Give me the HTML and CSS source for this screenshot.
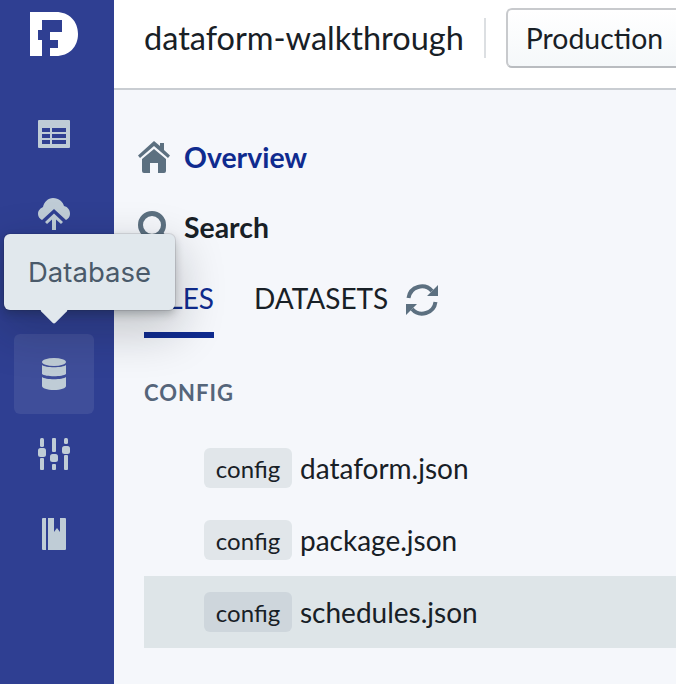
FILE: index.html
```html
<!DOCTYPE html>
<html lang="en">
<head>
<meta charset="utf-8">
<title>dataform-walkthrough</title>
<link rel="stylesheet" href="styles.css">
</head>
<body>
<div class="app">
  <nav class="rail">
    <div class="logo">
      <svg width="48" height="44" viewBox="0 0 48 44"><path fill="#fff" fill-rule="evenodd" d="M0 0H26C39 0 48 9 48 22S39 44 26 44H0ZM12 8V18H8V28H12V44H20V36H28V28H20V20H32V8Z"/></svg>
    </div>
    <a class="rail-item">
      <svg width="32" height="28" viewBox="0 0 32 28"><path class="glyph" fill-rule="evenodd" d="M1 0H31A1 1 0 0 1 32 1V27A1 1 0 0 1 31 28H1A1 1 0 0 1 0 27V1A1 1 0 0 1 1 0ZM4 8V12H12V8ZM14 8V12H28V8ZM4 14V18H12V14ZM14 14V18H28V14ZM4 20V24H12V20ZM14 20V24H28V20Z"/></svg>
    </a>
    <a class="rail-item">
      <svg width="32" height="32" viewBox="0 0 32 32"><path class="glyph" d="M15 0C21 0 25 4 26 8C30 9 32 12 32 16C32 19 30 21 28 22L16 11L4 22C2 21 0 19 0 16C0 12 3 10 5 9C6 4 10 0 15 0Z"/><path class="glyph" d="M16 15.500L25 24L23 26L18 21.500V32H14V21.500L9 26L7 24Z"/></svg>
    </a>
    <a class="rail-item"></a>
    <a class="rail-item is-active">
      <svg width="24" height="32" viewBox="0 0 24 32"><ellipse class="glyph" cx="12" cy="4" rx="12" ry="4"/><path class="glyph" d="M0 7C3 10 21 10 24 7V16C21 19 3 19 0 16Z"/><path class="glyph" d="M0 19C3 22 21 22 24 19V28C24 30 19 32 12 32S0 30 0 28Z"/></svg>
    </a>
    <a class="rail-item">
      <svg width="32" height="32" viewBox="0 0 32 32"><g class="glyph"><rect x="2" width="4" height="9" rx="1.500"/><rect x="2" y="20" width="4" height="12" rx="1"/><rect y="10" width="8" height="9" rx="2.500"/><rect x="14" width="4" height="14" rx="1"/><rect x="14" y="26" width="4" height="6" rx="1"/><rect x="12" y="16" width="8" height="8" rx="2.500"/><rect x="26" width="4" height="6" rx="1.500"/><rect x="26" y="17" width="4" height="15" rx="1"/><rect x="24" y="8" width="8" height="8" rx="2.500"/></g></svg>
    </a>
    <a class="rail-item">
      <svg width="24" height="32" viewBox="0 0 24 32"><path class="glyph" d="M1 0H4V32H1A1 1 0 0 1 0 31V1A1 1 0 0 1 1 0ZM6 0H12V14L15 10L18 14V0H23A1 1 0 0 1 24 1V31A1 1 0 0 1 23 32H6Z"/></svg>
    </a>
  </nav>
  <div class="main">
    <header class="topbar">
      <h1 class="project">dataform-walkthrough</h1>
      <span class="divider"></span>
      <button class="env-button">Production</button>
    </header>
    <section class="content">
      <a class="link link-primary">
        <svg class="link-icon" width="32" height="32" viewBox="0 0 32 32"><path class="slate" d="M16 0L22 5V2H26V9L32 14.500L30 17L16 5L2 17L0 14.500Z"/><path class="slate" d="M16 8L28 18V30A2 2 0 0 1 26 32H20V22H12V32H6A2 2 0 0 1 4 30V18Z"/></svg>
        <span>Overview</span>
      </a>
      <a class="link">
        <svg class="link-icon" width="32" height="32" viewBox="0 0 32 32"><circle cx="14" cy="14" r="11.500" fill="none" stroke="#5c7080" stroke-width="5"/><path d="M23 23L30 30" stroke="#5c7080" stroke-width="5"/></svg>
        <span>Search</span>
      </a>
      <div class="tabs">
        <span class="tab is-selected">FILES</span>
        <span class="tab">DATASETS
          <svg class="refresh" width="32" height="32" viewBox="0 0 32 32" fill="none"><path d="M2.500 14A13.500 13.500 0 0 1 26 7M29.500 18A13.500 13.500 0 0 1 6 25" stroke="#5c7080" stroke-width="4"/><path class="slate" d="M32 1V12H21ZM0 31V20H11Z"/></svg>
        </span>
      </div>
      <h2 class="section-title">CONFIG</h2>
      <ul class="files">
        <li class="file"><span class="tag">config</span><span>dataform.json</span></li>
        <li class="file"><span class="tag">config</span><span>package.json</span></li>
        <li class="file is-selected"><span class="tag">config</span><span>schedules.json</span></li>
      </ul>
    </section>
  </div>
</div>
<div class="tooltip">Database</div>
</body>
</html>
```
FILE: styles.css
```css
* { box-sizing: border-box; }
html, body { margin: 0; height: 100%; overflow: hidden; }
body { font-family: Lato, "Liberation Sans", sans-serif; color: #182026; background: #f5f7fb; }
.app { display: flex; height: 684px; overflow: hidden; }
.rail { width: 114px; flex: none; background: #2f3f92; padding-left: 14px; display: flex; flex-direction: column; }
.logo { height: 94px; width: 80px; padding: 12px 0 0 16px; }
.logo svg { display: block; }
.rail-item { width: 80px; height: 80px; flex: none; display: flex; align-items: center; justify-content: center; border-radius: 6px; }
.rail-item.is-active { background: rgba(255,255,255,.08); }
.glyph { fill: #bfccd6; }
.slate { fill: #5c7080; }
.main { flex: 1; min-width: 0; overflow: hidden; display: flex; flex-direction: column; }
.topbar { height: 90px; flex: none; background: #fff; border-bottom: 2px solid #c9cdd2; display: flex; align-items: center; padding: 0 0 12px 30px; white-space: nowrap; }
.project { margin: 0; font-size: 32.5px; font-weight: 400; line-height: 40px; }
.divider { width: 2px; height: 40px; background: #dcdfe2; margin: 0 20px; flex: none; }
.env-button { flex: none; height: 60px; width: 170px; padding: 0 18px; text-align: left; font: 400 28.4px Lato, sans-serif; color: #182026; background: linear-gradient(#fff, #f5f8fa); border: 2px solid #c8cacd; border-bottom-color: #b9bcc0; border-radius: 6px 0 0 6px; border-right: 0; }
.content { padding: 47px 0 0 30px; }
.link { display: flex; align-items: center; gap: 14px; height: 40px; font-size: 28.4px; font-weight: 700; margin-left: -6px; margin-bottom: 30px; }
.link-primary { color: #0f2b8f; }
.link-icon { flex: none; }
.tabs { display: flex; gap: 40px; height: 71px; font-size: 28px; }
.tab { display: flex; align-items: flex-start; gap: 18px; height: 61px; padding-top: 4px; white-space: nowrap; }
.tab.is-selected { color: #0f2b8f; width: 70px; border-bottom: 6px solid #0f2b8f; justify-content: flex-end; }
.refresh { flex: none; margin-top: 3px; }
.section-title { margin: 31px 0 25px; font-size: 22px; line-height: 28px; font-weight: 700; color: #55657a; letter-spacing: 1px; }
.files { list-style: none; margin: 0; padding: 0; }
.file { height: 72px; display: flex; align-items: center; gap: 8px; padding-left: 60px; font-size: 28px; }
.file.is-selected { background: #dee5e8; }
.tag { height: 40px; width: 88px; display: flex; align-items: center; justify-content: center; font-size: 24px; background: #e1e6ea; border-radius: 6px; }
.is-selected .tag { background: #ced6dc; }
.tooltip { position: absolute; left: 4px; top: 234px; width: 171px; height: 76px; display: flex; align-items: center; justify-content: center; background: #e1e8ed; color: #4a5a6a; border-radius: 6px; font: 400 27.5px Inter, sans-serif; box-shadow: 0 0 0 1px rgba(16,22,26,.1), 0 4px 8px rgba(16,22,26,.25), 0 18px 46px 6px rgba(16,22,26,.2); }
.tooltip::after { content: ""; position: absolute; left: 40px; bottom: -10px; width: 20px; height: 20px; background: #e1e8ed; transform: rotate(45deg); border-radius: 2px; }
```
